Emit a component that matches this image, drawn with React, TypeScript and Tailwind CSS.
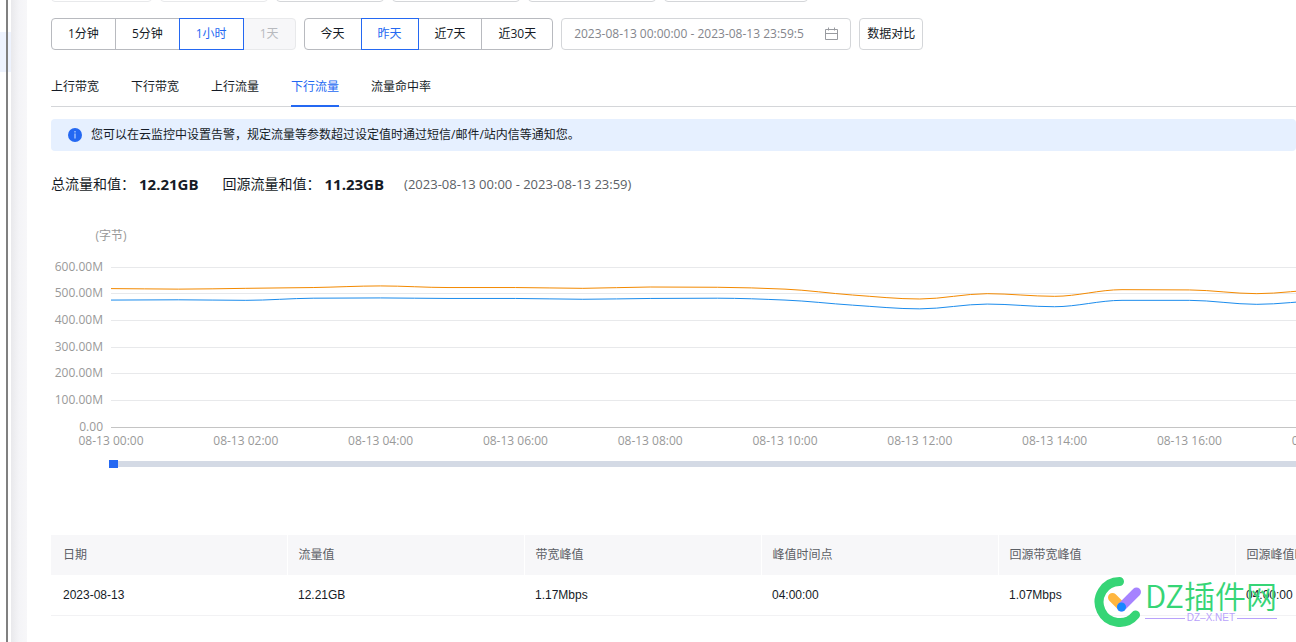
import { clsx } from 'clsx';

const intervals = [
  { label: '1分钟' },
  { label: '5分钟' },
  { label: '1小时', active: true },
  { label: '1天', disabled: true },
];

const ranges = [
  { label: '今天' },
  { label: '昨天', active: true },
  { label: '近7天' },
  { label: '近30天' },
];

const tabs = ['上行带宽', '下行带宽', '上行流量', '下行流量', '流量命中率'];

const columns = ['日期', '流量值', '带宽峰值', '峰值时间点', '回源带宽峰值', '回源峰值时间点', '操作'];
const row = ['2023-08-13', '12.21GB', '1.17Mbps', '04:00:00', '1.07Mbps', '04:00:00', ''];

// hourly traffic in MB
const total = [519, 517, 520, 523, 529, 523, 523, 520, 525, 524, 517, 495, 480, 500, 490, 515, 514, 500, 516, 520, 518, 514, 517, 519];
const origin = [476, 477, 475, 483, 484, 482, 482, 479, 482, 483, 476, 457, 443, 461, 451, 475, 475, 460, 475, 480, 478, 474, 477, 479];

const LEFT = 60;
const TOP = 47;
const STEP = 67.4;
const HEIGHT = 160;

function linePath(values: number[]) {
  const pts = values.map((v, i) => [LEFT + i * STEP, TOP + HEIGHT - (v / 600) * HEIGHT]);
  const slope = (i: number) => {
    if (i === 0 || i === pts.length - 1) return 0;
    const a = pts[i][1] - pts[i - 1][1];
    const b = pts[i + 1][1] - pts[i][1];
    return a * b <= 0 ? 0 : (2 * a * b) / (a + b);
  };
  let d = `M${pts[0][0]} ${pts[0][1]}`;
  for (let i = 1; i < pts.length; i++) {
    const [x0, y0] = pts[i - 1];
    const [x1, y1] = pts[i];
    d += `C${x0 + STEP / 3} ${y0 + slope(i - 1) / 3} ${x1 - STEP / 3} ${y1 - slope(i) / 3} ${x1} ${y1}`;
  }
  return d;
}

type Option = { label: string; active?: boolean; disabled?: boolean };

const ButtonGroup = ({ options }: { options: Option[] }) => (
  <div className="flex">
    {options.map((o) => (
      <button
        key={o.label}
        type="button"
        disabled={o.disabled}
        className={clsx(
          'h-8 px-4 border -ml-px first:ml-0 first:rounded-l last:rounded-r',
          o.active && 'relative z-10 border-[#2468f2] text-[#2468f2]',
          o.disabled && 'border-[#e8e9eb] bg-[#f7f7f9] text-[#b8babf]',
          !o.active && !o.disabled && 'border-[#b8babf]',
        )}
      >
        {o.label}
      </button>
    ))}
  </div>
);

const CalendarIcon = () => (
  <svg className="w-[14px] h-[14px]" viewBox="0 0 14 14" fill="none" stroke="#999ba0">
    <path d="M1.5 2.5h12v10h-12zM1.500 6.500h12M4.500 0.500v3M10.500 0.500v3" />
  </svg>
);

const InfoIcon = () => (
  <svg className="w-[14px] h-[14px]" viewBox="0 0 14 14">
    <circle cx="7" cy="7" r="7" fill="#2468f2" />
    <path d="M6.500 3h1v1.500h-1zM6.500 5.500h1v5h-1z" fill="#d4e5ff" />
  </svg>
);

const FilterRow = () => (
  <div className="flex gap-2 h-[2px] items-end overflow-hidden">
    <div className="w-[101px] h-8 shrink-0 border border-[#e8e9eb] rounded" />
    <div className="w-[108px] h-8 shrink-0 border border-[#e8e9eb] rounded" />
    <div className="w-[108px] h-8 shrink-0 border border-[#d4d6d9] rounded" />
    <div className="w-[128px] h-8 shrink-0 border border-[#d4d6d9] rounded" />
    <div className="w-[128px] h-8 shrink-0 border border-[#d4d6d9] rounded" />
    <div className="w-[144px] h-8 shrink-0 border border-[#d4d6d9] rounded" />
  </div>
);

const Chart = () => (
  <svg
    className="block w-[1660px] h-[260px] text-[12px]"
    viewBox="0 0 1660 260"
    fill="#999"
    role="img"
    aria-label="下行流量"
  >
    <text x="60" y="20" textAnchor="middle">(字节)</text>
    {[600, 500, 400, 300, 200, 100, 0].map((v) => {
      const y = Math.floor(TOP + HEIGHT - (v / 600) * HEIGHT);
      return (
        <g key={v}>
          <path d={`M${LEFT} ${y + 0.5}H1640`} stroke={v ? '#e8e9eb' : '#c4c4c4'} />
          <text x="52" y={y + 4} textAnchor="end">{v ? `${v}.00M` : '0.00'}</text>
        </g>
      );
    })}
    {Array.from({ length: 12 }, (_, i) => (
      <text key={i} x={LEFT + i * STEP * 2} y="225" textAnchor="middle">
        {`08-13 ${String(i * 2).padStart(2, '0')}:00`}
      </text>
    ))}
    <path d={linePath(total)} fill="none" stroke="#f38900" />
    <path d={linePath(origin)} fill="none" stroke="#1b8ced" />
    <rect x="60" y="241" width="1580" height="6" fill="#d4dae5" />
    <rect x="58" y="240" width="9" height="8" fill="#2468f2" />
  </svg>
);

const Watermark = () => (
  <div className="absolute right-[19px] bottom-[14px] flex items-start gap-1">
    <svg className="w-[47px] h-[51px]" viewBox="0 0 47 51" fill="none" strokeLinecap="round">
      <path d="M25.500 4.500A20.500 20.500 0 1 0 41.500 38" stroke="#36d576" strokeWidth="9" />
      <path d="M18.500 20.500l9 9" stroke="#ffb63f" strokeWidth="9" />
      <path d="M42.500 15L27.500 30" stroke="#a683ff" strokeWidth="9" />
      <circle cx="27.500" cy="30" r="4.500" fill="#1687ff" />
    </svg>
    <div>
      <div className="h-9 text-[31px] leading-9 font-[350] whitespace-nowrap text-[#36d576] font-['Noto_Sans_CJK_SC',sans-serif]">
        DZ插件网
      </div>
      <div className="flex items-center gap-[2px] h-[10px] text-[10px] leading-[10px] text-[#b9a2fb] font-['Liberation_Sans',sans-serif]">
        <span className="flex-1 h-px bg-[#b9a2fb]" />
        DZ–X.NET
        <span className="flex-1 h-px bg-[#b9a2fb]" />
      </div>
    </div>
  </div>
);

export default function App() {
  return (
    <div className="relative flex min-h-screen overflow-hidden bg-white text-[12px] leading-5 text-[#151b26] font-['Open_Sans','Noto_Sans_CJK_SC',sans-serif]">
      <div className="flex w-[11px] shrink-0">
        <div className="w-[6px] pt-8">
          <div className="h-10 bg-[#eef3fe]" />
        </div>
        <div className="w-[2px] bg-[#808080]" />
        <div className="w-[3px] pt-8">
          <div className="h-10 bg-[#eef3fe]" />
        </div>
      </div>
      <div className="w-4 shrink-0 bg-linear-to-r from-[#e9e9ec] via-[#f4f4f7] to-[#f7f7f9]" />

      <main className="flex-1 min-w-0 pl-6 overflow-hidden">
        <FilterRow />

        <div className="flex gap-2 mt-4 whitespace-nowrap">
          <ButtonGroup options={intervals} />
          <ButtonGroup options={ranges} />
          <div className="flex items-center w-[290px] h-8 px-3 gap-2 border border-[#d4d6d9] rounded text-[#84868c]">
            <input
              type="text"
              aria-label="时间范围"
              readOnly
              className="flex-1 min-w-0 outline-none"
              value="2023-08-13 00:00:00 - 2023-08-13 23:59:5"
            />
            <CalendarIcon />
          </div>
          <button type="button" className="h-8 px-[7px] border border-[#d4d6d9] rounded">
            数据对比
          </button>
        </div>

        <nav className="flex gap-8 mt-[15px] border-b border-[#d4d6d9]">
          {tabs.map((t) => (
            <button
              key={t}
              type="button"
              className={clsx(
                'h-[42px] pt-[3px] -mb-px border-b-2',
                t === '下行流量' ? 'border-[#2468f2] text-[#2468f2]' : 'border-transparent',
              )}
            >
              {t}
            </button>
          ))}
        </nav>

        <div className="flex items-center gap-[9px] h-8 mt-3 pl-[17px] rounded bg-[#e6f0ff]">
          <InfoIcon />
          <p>您可以在云监控中设置告警，规定流量等参数超过设定值时通过短信/邮件/站内信等通知您。</p>
        </div>

        <div className="flex items-center h-5 mt-[23px] text-[14px] whitespace-nowrap">
          <span>总流量和值：</span>
          <b className="ml-1 text-[15px]">12.21GB</b>
          <span className="ml-6">回源流量和值：</span>
          <b className="ml-1 text-[15px]">11.23GB</b>
          <span className="ml-5 text-[13px] text-[#5c5f66]">(2023-08-13 00:00 - 2023-08-13 23:59)</span>
        </div>

        <div className="mt-[26px]">
          <Chart />
        </div>

        <table className="w-[1658px] mt-[55px] table-fixed text-left">
          <thead>
            <tr className="h-10">
              {columns.map((c) => (
                <th
                  key={c}
                  className="w-[237px] first:w-[236px] pl-[11px] first:pl-3 font-normal text-[#5c5f66] bg-[#f7f7f9] border-r border-white"
                >
                  {c}
                </th>
              ))}
            </tr>
          </thead>
          <tbody>
            <tr className="h-10 border-b border-[#f2f2f4] font-['Liberation_Sans',sans-serif]">
              {row.map((c, i) => (
                <td key={i} className="pl-[11px] first:pl-3">{c}</td>
              ))}
            </tr>
          </tbody>
        </table>
      </main>

      <Watermark />
    </div>
  );
}
